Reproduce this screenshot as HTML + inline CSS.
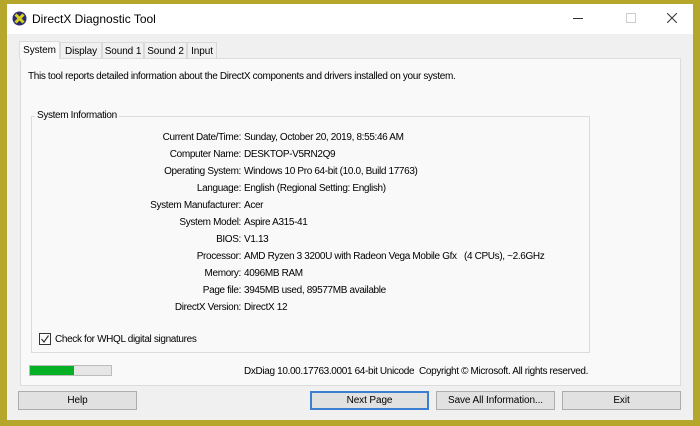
<!DOCTYPE html>
<html><head><meta charset="utf-8"><style>
*{box-sizing:border-box;margin:0;padding:0}
body{width:700px;height:426px;background:#b5a72c;position:relative;overflow:hidden;font-family:"Liberation Sans",Tahoma,sans-serif;font-size:10px;letter-spacing:-0.35px;color:#000}
.win{position:absolute;left:7px;top:4px;width:686px;height:416px;background:#f0f0f0}
.title{position:absolute;left:0;top:0;width:686px;height:30px;background:#fff}
.abs{position:absolute;white-space:nowrap}
.tab{position:absolute;top:38px;height:17px;border:1px solid #d9d9d9;border-bottom:none;background:#f0f0f0;padding-top:3px;text-align:center;white-space:nowrap;overflow:hidden;letter-spacing:-0.1px}
.panel{position:absolute;left:13px;top:54px;width:661px;height:328px;background:#f9f9f9;border:1px solid #dcdcdc}
.grp{position:absolute;left:10px;top:57px;width:559px;height:237px;border:1px solid #dcdcdc}
.lbl{position:absolute;right:348px;white-space:nowrap}
.val{position:absolute;left:212px;white-space:nowrap}
.btn{position:absolute;top:387px;height:19px;background:#e1e1e1;border:1px solid #adadad;text-align:center;line-height:18px;letter-spacing:-0.1px}
</style></head><body>
<div class="win">
<div class="title">
<svg class="abs" style="left:5px;top:7px" width="15" height="15" viewBox="0 0 15 15"><circle cx="7.5" cy="7.5" r="7" fill="#2b2b6e"/><path d="M3.5 3.5L11.5 11.5M11.5 3.5L3.5 11.5" stroke="#d8d020" stroke-width="3"/></svg>
<div class="abs" style="left:25px;top:8px;font-size:12px;letter-spacing:0">DirectX Diagnostic Tool</div>
<div class="abs" style="left:566px;top:14px;width:10px;height:1px;background:#333"></div>
<div class="abs" style="left:619px;top:9px;width:10px;height:10px;border:1px solid #ccc"></div>
<svg class="abs" style="left:660px;top:9px" width="10" height="10"><path d="M0 0L10 10M10 0L0 10" stroke="#333" stroke-width="1"/></svg>
</div>
<div class="tab" style="left:12px;width:41px;top:37px;height:18px;background:#f9f9f9;z-index:2;border-color:#dcdcdc">System</div>
<div class="tab" style="left:53px;width:42px">Display</div>
<div class="tab" style="left:95px;width:42px">Sound 1</div>
<div class="tab" style="left:137px;width:43px">Sound 2</div>
<div class="tab" style="left:180px;width:30px">Input</div>
<div class="panel">
<div class="abs" style="left:7px;top:12px">This tool reports detailed information about the DirectX components and drivers installed on your system.</div>
<div class="grp">
<div class="abs" style="left:3px;top:-7px;background:#f9f9f9;padding:0 2px">System Information</div>
<div class="lbl" style="top:15px">Current Date/Time:</div><div class="val" style="top:15px">Sunday, October 20, 2019, 8:55:46 AM</div>
<div class="lbl" style="top:32px">Computer Name:</div><div class="val" style="top:32px">DESKTOP-V5RN2Q9</div>
<div class="lbl" style="top:49px">Operating System:</div><div class="val" style="top:49px">Windows 10 Pro 64-bit (10.0, Build 17763)</div>
<div class="lbl" style="top:66px">Language:</div><div class="val" style="top:66px">English (Regional Setting: English)</div>
<div class="lbl" style="top:83px">System Manufacturer:</div><div class="val" style="top:83px">Acer</div>
<div class="lbl" style="top:100px">System Model:</div><div class="val" style="top:100px">Aspire A315-41</div>
<div class="lbl" style="top:117px">BIOS:</div><div class="val" style="top:117px">V1.13</div>
<div class="lbl" style="top:134px">Processor:</div><div class="val" style="top:134px">AMD Ryzen 3 3200U with Radeon Vega Mobile Gfx &nbsp;&nbsp;(4 CPUs), ~2.6GHz</div>
<div class="lbl" style="top:151px">Memory:</div><div class="val" style="top:151px">4096MB RAM</div>
<div class="lbl" style="top:168px">Page file:</div><div class="val" style="top:168px">3945MB used, 89577MB available</div>
<div class="lbl" style="top:185px">DirectX Version:</div><div class="val" style="top:185px">DirectX 12</div>
<div class="abs" style="left:7px;top:216px;width:12px;height:12px;border:1px solid #333;background:#fff"></div>
<svg class="abs" style="left:8px;top:217px" width="10" height="10"><path d="M1.5 5L4 8L8.5 1.5" stroke="#333" fill="none" stroke-width="1.2"/></svg>
<div class="abs" style="left:23px;top:217px">Check for WHQL digital signatures</div>
</div>
<div class="abs" style="left:8px;top:306px;width:83px;height:11px;background:#e6e6e6;border:1px solid #bcbcbc"><div style="width:44px;height:9px;background:#06b025"></div></div>
<div class="abs" style="left:223px;top:307px">DxDiag 10.00.17763.0001 64-bit Unicode &nbsp;Copyright © Microsoft. All rights reserved.</div>
</div>
<div class="btn" style="left:11px;width:119px">Help</div>
<div class="btn" style="left:303px;width:119px;border:2px solid #3c7fd1;line-height:16px">Next Page</div>
<div class="btn" style="left:429px;width:119px">Save All Information...</div>
<div class="btn" style="left:555px;width:119px">Exit</div>
</div>
</body></html>
